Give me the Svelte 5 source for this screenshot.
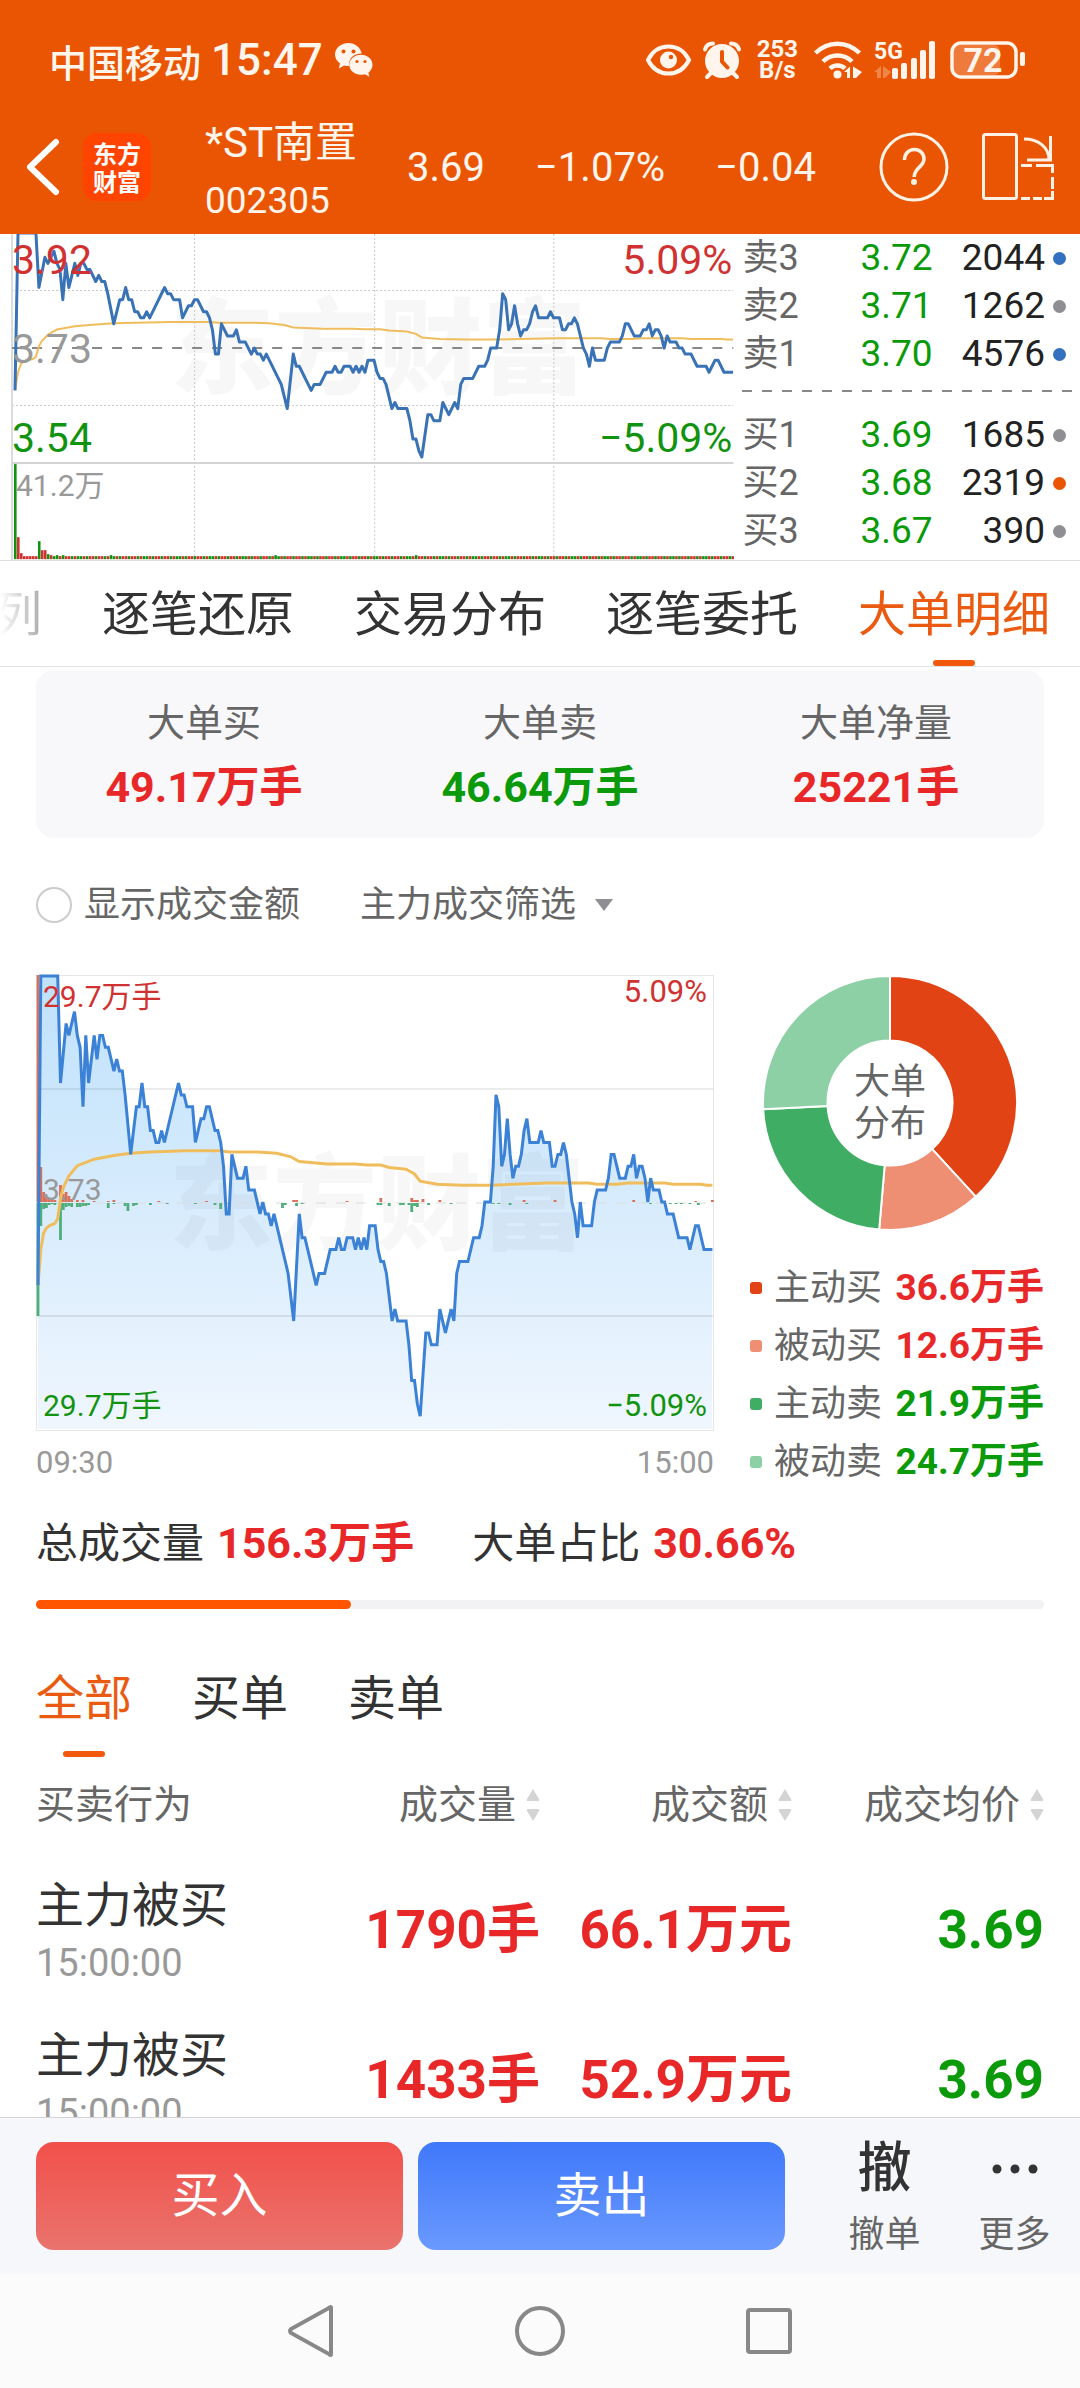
<script lang="ts">
  type Tone = 'up' | 'down';

  // ── Minute line, as [minute, ticks from the previous close] ──
  const price: [number, number][] = [
    [0, -7], [1, 19], [7, 19], [8, 10], [10, 15], [11, 14], [13, 16], [14, 14], [15, 13], [16, 8],
    [17, 14], [18, 10], [20, 14], [21, 12], [22, 14], [23, 14], [24, 13], [25, 13], [27, 11], [28, 12],
    [29, 11], [30, 11], [31, 9], [33, 4], [35, 8], [36, 8], [37, 10], [38, 8], [39, 8], [40, 6],
    [41, 6], [42, 5], [43, 5], [44, 6], [45, 5], [50, 10], [51, 9], [52, 9], [53, 8], [55, 8],
    [56, 5], [58, 7], [59, 7], [60, 8], [61, 8], [63, 6], [64, 6], [65, 5], [66, 3], [67, -1],
    [68, -1], [69, 4], [71, 2], [73, 2], [74, 3], [75, 1], [77, 1], [79, -1], [80, 0], [81, -1],
    [82, -1], [83, -2], [84, -1], [89, -6], [91, -10], [93, -1], [94, -3], [95, -3], [99, -7], [100, -6],
    [102, -6], [104, -4], [106, -4], [107, -3], [108, -4], [109, -4], [110, -3], [112, -3], [113, -4], [114, -3],
    [115, -4], [116, -3], [117, -4], [118, -2], [120, -2], [121, -4], [122, -5], [123, -5], [124, -6], [126, -10],
    [127, -9], [128, -10], [131, -10], [132, -12], [133, -15], [134, -15], [135, -17], [136, -18], [138, -11], [139, -11],
    [140, -12], [142, -12], [143, -9], [145, -11], [147, -9], [148, -10], [149, -6], [150, -5], [153, -5], [155, -3],
    [157, -3], [158, -2], [159, 0], [161, 0], [162, 3], [163, 9], [164, 8], [165, 3], [166, 4], [167, 7],
    [168, 4], [169, 2], [170, 3], [171, 3], [172, 4], [173, 6], [174, 7], [175, 5], [178, 5], [179, 6],
    [180, 5], [182, 5], [183, 3], [184, 3], [185, 4], [186, 4], [187, 5], [188, 4], [190, 0], [191, -1],
    [192, -3], [193, 0], [194, -2], [197, -2], [198, 0], [199, 1], [202, 1], [203, 2], [204, 4], [205, 4],
    [207, 2], [209, 2], [210, 3], [211, 3], [212, 4], [213, 2], [214, 3], [215, 3], [216, 2], [217, 0],
    [218, 2], [219, 1], [221, 1], [222, 0], [223, 0], [224, -1], [226, -1], [228, -3], [231, -3], [232, -4],
    [234, -2], [235, -2], [237, -4], [240, -4],
  ];

  const average: [number, number][] = [
    [0, -7], [1, -4], [2, -2.6], [3, -2.2], [4, -2], [6, -1.8], [7, -1.4], [8, 0.3], [9, 1.2], [11, 2.2],
    [14, 3.05], [20, 3.6], [27, 3.9], [33, 4.1], [40, 4.2], [52, 4.3], [65, 4.3], [68, 4.2], [78, 4.2], [85, 4.1],
    [90, 3.8], [93, 3.4], [103, 3.2], [113, 3.2], [117, 3.1], [122, 3.1], [125, 2.9], [131, 2.75], [134, 2.35], [136, 1.75],
    [142, 1.5], [151, 1.4], [161, 1.4], [181, 1.6], [196, 1.6], [199, 1.5], [206, 1.5], [210, 1.6], [223, 1.6], [226, 1.5],
    [236, 1.5], [238, 1.4], [240, 1.4],
  ];

  function toPoints(data: [number, number][], x0: number, stepX: number, midY: number, tick: number): string {
    return data.map(([i, t]) => `${(x0 + i * stepX).toFixed(1)},${(midY - t * tick).toFixed(1)}`).join(' ');
  }

  const topPrice = toPoints(price, 15, 2.99, 114, 6.05);
  const topAverage = toPoints(average, 15, 2.99, 114, 6.05);
  const flowPrice = toPoints(price, 2, 2.81, 227, 11.9);
  const flowAverage = toPoints(average, 2, 2.81, 227, 11.9);

  // ── Volume strip ─────────────────────────────────────────
  const tall: Record<number, [number, Tone]> = {
    0: [95, 'down'], 1: [22, 'up'], 2: [6, 'up'], 8: [18, 'down'], 9: [9, 'up'], 10: [9, 'up'],
    11: [5, 'down'], 12: [4, 'up'], 14: [4, 'down'], 16: [4, 'down'], 32: [4, 'down'], 87: [4, 'down'],
    134: [4, 'down'],
  };
  const volume = Array.from({ length: 241 }, (_, i) => {
    const [h, tone] = tall[i] ?? [3, i > 8 && (i * 7) % 11 < 5 ? 'down' : 'up'];
    return { x: 14 + i * 2.99, h, tone };
  });

  // ── Big orders per minute: [minute, bought, sold] ────────
  const flow: [number, number, number][] = [
    [0, 227, 113], [1, 35, 23], [2, 10, 6], [3, 5, 5], [4, 4, 2], [5, 3, 1], [6, 2, 2], [8, 17, 37],
    [9, 8, 7], [10, 10, 4], [11, 6, 3], [12, 3, 4], [14, 2, 4], [15, 0, 4], [16, 2, 3], [17, 0, 3],
    [18, 0, 2], [20, 1, 0], [25, 1, 5], [27, 2, 1], [31, 0, 3], [32, 0, 8], [34, 0, 3], [35, 0, 2],
    [40, 0, 2], [43, 1, 0], [46, 0, 1], [56, 0, 1], [60, 1, 0], [63, 0, 2], [65, 0, 6], [67, 0, 1],
    [87, 0, 5], [88, 0, 2], [91, 2, 0], [92, 2, 3], [94, 0, 1], [110, 1, 0], [121, 0, 2], [122, 4, 2],
    [125, 0, 3], [129, 0, 2], [130, 0, 2], [132, 0, 2], [133, 4, 9], [134, 2, 3], [135, 2, 4], [137, 3, 0],
    [139, 0, 2], [143, 2, 0], [147, 0, 1], [162, 0, 1], [164, 0, 1], [168, 0, 2], [173, 2, 0], [174, 0, 1],
    [184, 2, 0], [212, 2, 0], [218, 0, 1], [225, 0, 1], [227, 0, 1], [229, 0, 1], [232, 0, 1], [234, 1, 0],
    [235, 0, 2], [240, 2, 0],
  ];

  // ── Order book ───────────────────────────────────────────
  const asks = [
    { label: '卖3', price: '3.72', size: 2044, mark: 'blue' },
    { label: '卖2', price: '3.71', size: 1262, mark: 'grey' },
    { label: '卖1', price: '3.70', size: 4576, mark: 'blue' },
  ];
  const bids = [
    { label: '买1', price: '3.69', size: 1685, mark: 'grey' },
    { label: '买2', price: '3.68', size: 2319, mark: 'orange' },
    { label: '买3', price: '3.67', size: 390, mark: 'grey' },
  ];

  const tabs = ['列', '逐笔还原', '交易分布', '逐笔委托', '大单明细'];
  let tab = $state('大单明细');

  const summary: { label: string; value: string; tone: Tone }[] = [
    { label: '大单买', value: '49.17万手', tone: 'up' },
    { label: '大单卖', value: '46.64万手', tone: 'down' },
    { label: '大单净量', value: '25221手', tone: 'up' },
  ];

  const shares: { label: string; amount: number; color: string; tone: Tone }[] = [
    { label: '主动买', amount: 36.6, color: '#e24315', tone: 'up' },
    { label: '被动买', amount: 12.6, color: '#ee8f73', tone: 'up' },
    { label: '主动卖', amount: 21.9, color: '#3fae64', tone: 'down' },
    { label: '被动卖', amount: 24.7, color: '#8dd0a5', tone: 'down' },
  ];

  const total = shares.reduce((sum, s) => sum + s.amount, 0);
  const slices = shares.map((s, n) => {
    const before = shares.slice(0, n).reduce((sum, p) => sum + p.amount, 0);
    return { color: s.color, d: ring(before / total, (before + s.amount) / total) };
  });

  function ring(from: number, to: number): string {
    const at = (r: number, f: number) =>
      `${(129 + r * Math.sin(f * 2 * Math.PI)).toFixed(2)} ${(129 - r * Math.cos(f * 2 * Math.PI)).toFixed(2)}`;
    const large = to - from > 0.5 ? 1 : 0;
    return `M${at(128, from)}A128 128 0 ${large} 1 ${at(128, to)}L${at(63, to)}A63 63 0 ${large} 0 ${at(63, from)}Z`;
  }

  const filled = 31.25;

  const sides = ['全部', '买单', '卖单'];
  let side = $state('全部');
  let showAmount = $state(false);

  const columns = ['成交量', '成交额', '成交均价'];
  const orders = [
    { kind: '主力被买', time: '15:00:00', size: '1790手', amount: '66.1万元', price: '3.69' },
    { kind: '主力被买', time: '15:00:00', size: '1433手', amount: '52.9万元', price: '3.69' },
  ];
</script>

<div class="page">
  <header>
    <!-- ── Status bar ── -->
    <div class="status">
      <span class="carrier">中国移动</span>
      <span class="clock">15:47</span>
      <svg class="wechat" width="38" height="34" viewBox="0 0 38 34" fill="#fff5ec">
        <path d="M13.500 0C6 0 0 5 0 11.500c0 3.600 1.900 6.700 5 8.900L3.800 25.500l5.400-3c1.400.4 2.800.6 4.300.6h.6C13 15.500 19 10.300 26.700 10.500 25.500 4.500 20 0 13.500 0z" />
        <path d="M37.500 21.800c0-5.700-5.200-10-11.600-10s-11.600 4.400-11.600 10 5.200 10 11.600 10c1.400 0 2.800-.2 4-.6l4.500 2.500-1-4c2.500-1.900 4.100-4.700 4.100-7.900z" />
        <g fill="#ea5504">
          <circle cx="8.500" cy="8.500" r="2" /><circle cx="18.500" cy="8.500" r="2" />
          <circle cx="22" cy="18.500" r="1.600" /><circle cx="30" cy="18.500" r="1.600" />
        </g>
      </svg>
      <div class="status-icons">
        <svg width="45" height="32" viewBox="0 0 45 32" fill="none" stroke="#fff5ec" stroke-width="4">
          <path d="M2 16C6 8 13 2.500 22.500 2.500S39 8 43 16c-4 8-11 13.500-20.500 13.500S6 24 2 16z" />
          <circle cx="22.500" cy="16" r="8.500" fill="#fff5ec" stroke="none" />
          <circle cx="25" cy="13" r="2.200" fill="#ea5504" stroke="none" />
        </svg>
        <svg width="38" height="38" viewBox="0 0 38 38">
          <circle cx="19" cy="20" r="17" fill="#fff5ec" />
          <g fill="none" stroke="#fff5ec" stroke-width="4" stroke-linecap="round">
            <path d="M2 8.500C3 5 6 2.500 10 2.500M36 8.500C35 5 32 2.500 28 2.500M8 32l-4 4M30 32l4 4" />
          </g>
          <path d="M19 11v9.500l5.500 6" fill="none" stroke="#ea5504" stroke-width="4" stroke-linecap="round" />
        </svg>
        <span class="speed">253<br />B/s</span>
        <svg width="48" height="38" viewBox="0 0 48 38" fill="none" stroke="#fff5ec" stroke-width="4.500">
          <path d="M1.500 12C14-.5 33-.5 45.500 12M9 20.500c8-8 21-8 29 0M16 27.500c4-4 11-4 15 0" />
          <circle cx="23.500" cy="33.500" r="4" fill="#fff5ec" stroke="none" />
          <path d="M30 31l6-5.500V37h-3v-6zM39 25.500L48 31l-6 6h-3z" fill="#fff5ec" stroke="none" />
        </svg>
        <svg width="64" height="38" viewBox="0 0 64 38" fill="#fff5ec">
          <text x="0" y="18" font-size="23" font-weight="700">5G</text>
          <path d="M0 31l7-6v12H3v-6zM9 25l8 6-6 6H9z" opacity="0.3" />
          <rect x="18" y="27" width="6" height="11" rx="2" />
          <rect x="27" y="22" width="6" height="16" rx="2" />
          <rect x="37" y="17" width="6" height="21" rx="2" />
          <rect x="46" y="9" width="6" height="29" rx="2" />
          <rect x="55" y="0" width="6" height="38" rx="2" />
        </svg>
        <svg width="76" height="38" viewBox="0 0 76 38">
          <rect x="4" y="4" width="46" height="30" rx="6" fill="#fff" opacity="0.22" />
          <rect x="2" y="2" width="64" height="34" rx="9" fill="none" stroke="#fff5ec" stroke-width="3.500" />
          <rect x="70" y="11" width="5" height="14" rx="2" fill="#fff5ec" />
          <text x="33" y="31" font-size="34" font-weight="700" text-anchor="middle" fill="#fff5ec">72</text>
        </svg>
      </div>
    </div>

    <!-- ── Stock title ── -->
    <div class="title-row">
      <button class="icon-btn back" aria-label="返回">
        <svg width="34" height="58" viewBox="0 0 34 58" fill="none" stroke="#fff" stroke-width="6" stroke-linecap="round" stroke-linejoin="round">
          <path d="M30 4L4 29l26 25" />
        </svg>
      </button>
      <span class="logo">东方<br />财富</span>
      <div class="stock">
        <div class="stock-name">*ST南置</div>
        <div class="stock-code">002305</div>
      </div>
      <div class="quote">
        <span>3.69</span>
        <span>−1.07%</span>
        <span>−0.04</span>
      </div>
      <button class="icon-btn help" aria-label="帮助">
        <svg width="70" height="70" viewBox="0 0 70 70" fill="none" stroke="#fff2e4">
          <circle cx="35" cy="35" r="33" stroke-width="3" />
          <path d="M25.500 28c0-6 4-10.500 9.800-10.500S45 21.500 45 27c0 8-9.800 8.500-9.800 18" stroke-width="3.500" />
          <circle cx="35" cy="50" r="3" fill="#fff2e4" stroke="none" />
        </svg>
      </button>
      <button class="icon-btn" aria-label="横屏">
        <svg width="72" height="68" viewBox="0 0 72 68" fill="none" stroke="#fff2e4" stroke-width="3">
          <rect x="1.500" y="1.500" width="33" height="64" rx="2" />
          <path d="M42 6c14 0 25 8 25 21M45 27h23.500V3" />
          <path d="M39 32.500h11M54 32.500h9M62 32.500h8.500V40M70.500 44v12M70.500 58v7.500H62M39 65.500h9M51 65.500h9" />
        </svg>
      </button>
    </div>
  </header>

  <main>
    <!-- ── Minute chart and order book ── -->
    <section class="market">
      <svg class="minute" viewBox="0 0 734 326" role="img" aria-label="分时图">
        <text class="watermark" x="378" y="152" text-anchor="middle">东方财富</text>
        <g stroke="#c8c8c8" stroke-dasharray="2 2">
          <path d="M12 56.500H733M12 171.500H733M194.500 0V326M374.500 0V326M553.500 0V326" />
        </g>
        <path d="M12 0V326" stroke="#dcdcdc" stroke-width="2" />
        <path d="M12 229H733" stroke="#d4d4d4" stroke-width="2" />
        <path d="M12 114H733" stroke="#888" stroke-width="2" stroke-dasharray="10 10" />
        {#each volume as bar}
          <rect class={bar.tone} x={bar.x} y={325 - bar.h} width="2.600" height={bar.h} />
        {/each}
        <polyline points={topAverage} fill="none" stroke="#f0bd5c" stroke-width="2" />
        <polyline points={topPrice} fill="none" stroke="#3a73b5" stroke-width="3" stroke-linejoin="round" />
        <g font-size="41">
          <text class="up" x="12" y="40">3.92</text>
          <text x="12" y="129" fill="#999">3.73</text>
          <text class="down" x="12" y="218">3.54</text>
          <text class="up" x="732" y="40" text-anchor="end">5.09%</text>
          <text class="down" x="732" y="218" text-anchor="end">−5.09%</text>
        </g>
        <text x="16" y="262" font-size="30" fill="#999">41.2万</text>
      </svg>

      <div class="book">
        {#each asks as row}
          <div class="book-row">
            <span class="book-label">{row.label}</span>
            <span class="down">{row.price}</span>
            <span class="book-size">{row.size}</span>
            <i class="dot {row.mark}"></i>
          </div>
        {/each}
        <svg class="book-split" width="100%" height="2"><path d="M0 1H332" stroke="#888" stroke-width="2" stroke-dasharray="10 10" /></svg>
        {#each bids as row}
          <div class="book-row">
            <span class="book-label">{row.label}</span>
            <span class="down">{row.price}</span>
            <span class="book-size">{row.size}</span>
            <i class="dot {row.mark}"></i>
          </div>
        {/each}
      </div>
    </section>

    <nav class="tabs-bar">
      <div class="tabs">
        {#each tabs as name}
          <button class="tab" class:active={tab === name} onclick={() => (tab = name)}>{name}</button>
        {/each}
      </div>
    </nav>

    <div class="body">
      <section class="summary">
        {#each summary as item}
          <div>
            <div class="summary-label">{item.label}</div>
            <div class="summary-value {item.tone}">{item.value}</div>
          </div>
        {/each}
      </section>

      <!-- ── Options ── -->
      <div class="options">
        <label class="check">
          <input type="checkbox" bind:checked={showAmount} />
          显示成交金额
        </label>
        <div class="picker">
          <select aria-label="主力成交筛选">
            <option>主力成交筛选</option>
          </select>
          <svg width="18" height="12" viewBox="0 0 18 12"><path d="M0 0h18L9 12z" fill="#8e8e93" /></svg>
        </div>
      </div>

      <!-- ── Big order flow ── -->
      <section class="flow">
        <div>
          <svg class="flow-chart" viewBox="0 0 678 456" role="img" aria-label="大单分时">
            <defs>
              <linearGradient id="fill" x1="0" y1="0" x2="0" y2="1">
                <stop offset="0" stop-color="#bfe1fb" />
                <stop offset="1" stop-color="#eff6fe" />
              </linearGradient>
            </defs>
            <polygon points="2,454 {flowPrice} 676,454" fill="url(#fill)" />
            <text class="watermark" x="341" y="267" text-anchor="middle">东方财富</text>
            <path d="M0 114H678M0 341H678" stroke="#000" stroke-opacity="0.080" stroke-width="2" />
            <path d="M0 228H678" stroke="#dcdcdc" stroke-dasharray="10 10" />
            <rect x="0.500" y="0.500" width="677" height="455" fill="none" stroke="#e6e6e6" />
            {#each flow as [i, bought, sold]}
              <rect x={0.6 + i * 2.81} y={227 - bought} width="2.800" height={bought} fill="#d9705a" />
              <rect x={0.6 + i * 2.81} y="228" width="2.800" height={sold} fill="#4fae7c" />
            {/each}
            <polyline points={flowAverage} fill="none" stroke="#f0bd5c" stroke-width="3" />
            <polyline points={flowPrice} fill="none" stroke="#3b82d6" stroke-width="3" />
            <g font-size="30">
              <text class="up" x="7" y="32">29.7万手</text>
              <text class="down" x="7" y="441">29.7万手</text>
              <text x="7" y="225" fill="#999">3.73</text>
            </g>
            <g font-size="31" text-anchor="end">
              <text class="up" x="671" y="27">5.09%</text>
              <text class="down" x="671" y="441">−5.09%</text>
            </g>
          </svg>
          <div class="axis"><span>09:30</span><span>15:00</span></div>
        </div>
        <div class="share">
          <div class="donut">
            <svg viewBox="0 0 258 258" role="img" aria-label="大单分布">
              {#each slices as slice}
                <path d={slice.d} fill={slice.color} stroke="#fff" stroke-width="2" />
              {/each}
            </svg>
            <span class="donut-label">大单<br />分布</span>
          </div>
          <ul class="legend">
            {#each shares as s}
              <li>
                <i style="background: {s.color}"></i>
                <span>{s.label}</span>
                <b class={s.tone}>{s.amount}万手</b>
              </li>
            {/each}
          </ul>
        </div>
      </section>

      <div class="totals">
        <span>总成交量<b>156.3万手</b></span>
        <span>大单占比<b>30.66%</b></span>
      </div>
      <div class="progress"><div style="width: {filled}%"></div></div>

      <!-- ── Orders ── -->
      <div class="sides">
        {#each sides as name}
          <button class="tab" class:active={side === name} onclick={() => (side = name)}>{name}</button>
        {/each}
      </div>
      <table>
        <thead>
          <tr>
            <th>买卖行为</th>
            {#each columns as name}
              <th>
                <button class="sort">
                  {name}
                  <svg width="14" height="32" viewBox="0 0 14 32" fill="#d4d4d4">
                    <path d="M7 0l6 10q1 2-1 2H2q-2 0-1-2zM7 32l6-10q1-2-1-2H2q-2 0-1 2z" />
                  </svg>
                </button>
              </th>
            {/each}
          </tr>
        </thead>
        <tbody>
          {#each orders as order}
            <tr>
              <td>
                <div class="kind">{order.kind}</div>
                <div class="time">{order.time}</div>
              </td>
              <td class="up">{order.size}</td>
              <td class="up">{order.amount}</td>
              <td class="down">{order.price}</td>
            </tr>
          {/each}
        </tbody>
      </table>
    </div>
  </main>

  <!-- ── Trade bar ── -->
  <footer class="trade">
    <button class="trade-btn buy">买入</button>
    <button class="trade-btn sell">卖出</button>
    <button class="tool"><span class="tool-icon">撤</span>撤单</button>
    <button class="tool">
      <span class="tool-icon">
        <svg width="46" height="10" viewBox="0 0 46 10" fill="#333">
          <circle cx="5" cy="5" r="4.500" /><circle cx="23" cy="5" r="4.500" /><circle cx="41" cy="5" r="4.500" />
        </svg>
      </span>
      更多
    </button>
  </footer>

  <nav class="system" aria-label="系统导航">
    <button class="icon-btn" aria-label="返回上级">
      <svg width="52" height="52" viewBox="0 0 52 52"><path d="M46 3v46q0 2-2 0L6 28q-2-2 0-4L44 3q2-2 2 0z" /></svg>
    </button>
    <button class="icon-btn" aria-label="主屏幕">
      <svg width="52" height="52" viewBox="0 0 52 52"><circle cx="26" cy="26" r="23" /></svg>
    </button>
    <button class="icon-btn" aria-label="最近任务">
      <svg width="52" height="52" viewBox="0 0 52 52"><rect x="5" y="5" width="42" height="42" rx="2" /></svg>
    </button>
  </nav>
</div>

<style>
  :global(body) { background: #fff; }

  .page {
    display: flex; flex-direction: column; height: 100vh; overflow: hidden;
    font-family: Roboto, "Noto Sans CJK SC", sans-serif; color: #333;
  }
  button {
    padding: 0; border: 0; background: none; color: inherit;
    font: inherit; cursor: pointer; white-space: nowrap;
  }
  svg { display: block; flex-shrink: 0; overflow: visible; }
  .up { color: #e82828; }
  .down { color: #0a9a0a; }
  svg .up { fill: #d03232; }
  svg .down { fill: #12930f; }
  .watermark { font-size: 104px; font-weight: 900; fill: #000; fill-opacity: 0.030; }

  /* Header */
  header { background: #ea5504; color: #fff5ec; flex-shrink: 0; }
  .status { display: flex; align-items: center; padding: 20px 54px 0 49px; height: 80px; }
  .carrier { font-size: 38px; font-weight: 500; }
  .clock { font-size: 44px; font-weight: 500; margin: 0 12px 0 10px; }
  .status-icons { display: flex; align-items: center; gap: 12px; margin-left: auto; }
  .speed { padding: 0 4px; font-size: 24px; line-height: 21px; font-weight: 700; text-align: center; }

  .title-row { display: flex; align-items: center; height: 134px; padding: 0 26px; }
  .icon-btn { display: flex; }
  .logo {
    width: 68px; padding: 6px 0; margin: 0 54px 0 23px; border-radius: 14px; background: #ff4400;
    font-family: "Noto Sans CJK SC", sans-serif; font-size: 24px; font-weight: 700;
    line-height: 28px; text-align: center; color: #fff;
  }
  .stock { width: 152px; white-space: nowrap; }
  .stock-name { font-size: 42px; line-height: 68px; }
  .stock-code { font-size: 37px; line-height: 48px; }
  .quote { display: flex; gap: 50px; margin-left: 50px; font-size: 40px; }
  .help { margin: 0 33px 0 auto; }

  main { flex: 1; min-height: 0; overflow: hidden; }

  /* Minute chart */
  .market { display: grid; grid-template-columns: 68% 1fr; border-bottom: 1px solid #dedede; }
  .minute { width: 100%; height: auto; overflow: hidden; }
  .book { padding: 0 6px 0 8px; font-size: 37px; line-height: 48px; }
  .book-row { display: grid; grid-template-columns: 118px 1fr auto 21px; align-items: center; padding-right: 8px; }
  .book-label { font-size: 36px; color: #666; }
  .book-size { color: #222; }
  .dot { width: 13px; height: 13px; margin-left: 8px; border-radius: 50%; }
  .dot.blue { background: #3370c0; }
  .dot.grey { background: #8e8e93; }
  .dot.orange { background: #ea5504; }
  .book-split { margin: 12px 0 19px; overflow: hidden; }

  /* Tabs */
  .tabs-bar { border-bottom: 1px solid #e2e2e2; overflow: hidden; }
  .tabs {
    display: flex; justify-content: flex-end; gap: 60px; padding-right: 30px;
    -webkit-mask-image: linear-gradient(to right, transparent, #000 100px);
    mask-image: linear-gradient(to right, transparent, #000 100px);
  }
  .tab { position: relative; padding-top: 3px; font-size: 48px; line-height: 102px; }
  .tab.active { color: #ea5a10; }
  .tab.active::after {
    content: ''; position: absolute; left: 50%; bottom: 0; width: 42px; height: 6px;
    margin-left: -21px; border-radius: 3px; background: #f2590d;
  }

  .body { padding: 3px 36px 0; }

  .summary {
    display: grid; grid-template-columns: repeat(3, 1fr); padding: 21px 0 19px;
    border-radius: 18px; background: #f8f8fa; text-align: center;
  }
  .summary-label { font-size: 38px; line-height: 64px; color: #666; }
  .summary-value { font-size: 43px; line-height: 64px; font-weight: 700; }

  .options { display: flex; align-items: center; gap: 60px; padding: 40px 0 43px; font-size: 36px; line-height: 54px; color: #666; }
  .check { display: flex; align-items: center; gap: 12px; }
  .check input {
    appearance: none; width: 36px; height: 36px; margin: 0;
    border: 2px solid #ccc; border-radius: 50%;
  }
  .check input:checked { border-color: #ea5504; background: #ea5504; }
  .picker { display: flex; align-items: center; gap: 18px; }
  .picker select { appearance: none; padding: 0; border: 0; background: none; color: inherit; font: inherit; }

  /* Flow */
  .flow { display: grid; grid-template-columns: 678fr 294fr; gap: 36px; }
  .flow-chart { width: 100%; height: auto; }
  .axis { display: flex; justify-content: space-between; padding-top: 10px; font-size: 31px; line-height: 44px; color: #999; }
  .donut { position: relative; width: 256px; max-width: 100%; margin: 0 auto 0 12px; }
  .donut svg { width: 100%; height: auto; }
  .donut-label {
    position: absolute; inset: 0; display: flex; align-items: center; justify-content: center;
    font-size: 36px; line-height: 42px; color: #666;
  }
  .legend { margin: 0; padding: 28px 0 0; list-style: none; font-size: 36px; line-height: 58px; color: #666; }
  .legend li { display: flex; align-items: center; white-space: nowrap; }
  .legend i { width: 12px; height: 12px; margin-right: 12px; border-radius: 3px; }
  .legend b { margin-left: auto; font-size: 37px; }

  .totals { display: flex; gap: 58px; padding-top: 20px; font-size: 42px; line-height: 64px; }
  .totals b { margin-left: 13px; font-size: 43px; color: #e82828; }
  .progress { height: 9px; margin-top: 24px; border-radius: 5px; background: #f2f2f4; }
  .progress div { height: 100%; border-radius: 5px; background: #ff5500; }

  /* Orders */
  .sides { display: flex; gap: 60px; padding-top: 28px; }
  .sides .tab { line-height: 117px; }
  table { width: 100%; table-layout: fixed; border-collapse: collapse; white-space: nowrap; }
  th { padding: 16px 0 18px; font-size: 39px; line-height: 64px; font-weight: 400; color: #666; text-align: right; }
  td { height: 150px; padding: 0; font-size: 53px; line-height: 66px; font-weight: 700; text-align: right; }
  th:first-child, td:first-child { text-align: left; font-weight: 400; }
  .sort { display: inline-flex; align-items: center; gap: 10px; line-height: 64px; vertical-align: top; }
  .kind { font-size: 48px; line-height: 66px; }
  .time { font-size: 38px; line-height: 48px; color: #999; }

  /* Trade bar */
  .trade {
    display: flex; flex-shrink: 0; gap: 15px; padding: 24px 8px 24px 36px;
    border-top: 1px solid #d4d4d6; background: #f6f7fa;
  }
  .trade-btn { flex: 367; border-radius: 18px; font-size: 48px; line-height: 108px; color: #fff; }
  .buy { background: linear-gradient(#f2504a, #ea736d); }
  .sell { background: linear-gradient(#3f78fa, #6a99fe); }
  .tool {
    flex: 115; display: flex; flex-direction: column; align-items: center; justify-content: space-between;
    font-size: 36px; line-height: 30px; color: #666;
  }
  .tool:nth-child(3) { margin-left: 27px; }
  .tool-icon { display: flex; align-items: center; height: 54px; font-size: 54px; font-weight: 500; color: #333; }

  .system { display: flex; flex-shrink: 0; justify-content: center; gap: 177px; padding: 31px 0; background: #fbfbfb; }
  .system svg { fill: none; stroke: #888; stroke-width: 4; }
</style>
